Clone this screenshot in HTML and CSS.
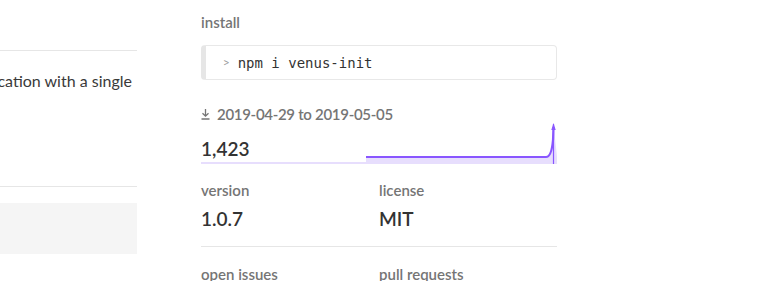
FILE: index.html
```html
<!DOCTYPE html>
<html>
<head>
<meta charset="utf-8">
<link rel="stylesheet" href="styles.css">
</head>
<body>
<div class="page">
  <div class="main">
    <div class="main-top"></div>
    <div class="readme">
      <p class="readme-text">ication with a single</p>
    </div>
    <div class="main-box"></div>
  </div>
  <aside class="sidebar">
    <h3 class="label">install</h3>
    <div class="install">
      <span class="prompt">&gt;</span>
      <code class="cmd">npm i venus-init</code>
    </div>
    <h3 class="label dl-label">
      <svg class="dl-icon" width="9" height="12" viewBox="0 0 9 12"><path d="M4.5 1 V8 M1.5 5.2 L4.5 8.2 L7.5 5.2 M0.5 11 H8.5" fill="none" stroke="#757575" stroke-width="1.3"/></svg>
      <span class="dl-range">2019-04-29 to 2019-05-05</span>
    </h3>
    <div class="downloads">
      <p class="value">1,423</p>
      <svg class="spark" width="356" height="46" viewBox="0 0 356 46" preserveAspectRatio="none">
        <rect x="0" y="44" width="356" height="2" fill="#e7defd"/>
        <path d="M165 46 V39 H346 C350 39 351 34 352 20 L352.5 6 L354 20 C355 30 356 36 356 39 V46 Z" fill="#e7defd"/>
        <path d="M165 39 H345 C349 39 351 33 352 22 L352.5 9" fill="none" stroke="#8956ff" stroke-width="2.2"/>
        <line x1="352.5" y1="6" x2="352.5" y2="46" stroke="#8956ff" stroke-width="1.2"/>
        <path d="M350.3 12 L352.5 5 L354.7 12 Z" fill="#8956ff"/>
      </svg>
    </div>
    <div class="pair">
      <div class="cell">
        <h3 class="label">version</h3>
        <p class="value">1.0.7</p>
      </div>
      <div class="cell">
        <h3 class="label">license</h3>
        <p class="value">MIT</p>
      </div>
    </div>
    <div class="pair">
      <div class="cell">
        <h3 class="label">open issues</h3>
      </div>
      <div class="cell">
        <h3 class="label">pull requests</h3>
      </div>
    </div>
  </aside>
</div>
</body>
</html>
```

FILE: styles.css
```css
html, body {
  margin: 0;
  padding: 0;
  background: #fff;
}
body {
  font-family: "Source Sans Pro", Lato, "Open Sans", sans-serif;
  color: #333;
  overflow: hidden;
  width: 781px;
  height: 281px;
}
.page {
  display: flex;
  gap: 64px;
}
.main {
  width: 137px;
  flex: none;
  overflow: hidden;
}
.main-top {
  height: 50px;
  border-bottom: 1px solid #e6e6e6;
}
.readme {
  height: 135px;
  border-bottom: 1px solid #e6e6e6;
  display: flex;
  justify-content: flex-end;
}
.readme-text {
  margin: 19px 5px 0 0;
  font-size: 16px;
  line-height: 22px;
  white-space: nowrap;
  color: #3a3a3a;
}
.main-box {
  margin-top: 16px;
  height: 51px;
  background: #f5f5f5;
}
.sidebar {
  width: 356px;
  flex: none;
}
.label {
  margin: 0;
  font-size: 15px;
  font-weight: 600;
  color: #757575;
  line-height: 20px;
}
.sidebar > .label:first-child {
  padding-top: 12px;
}
.install {
  margin-top: 13px;
  height: 33px;
  border: 1px solid #e8e8e8;
  border-left: 5px solid #e6e6e6;
  border-radius: 4px;
  display: flex;
  align-items: center;
  padding-left: 17px;
  gap: 8px;
}
.prompt {
  font-family: "DejaVu Sans Mono", monospace;
  font-size: 11px;
  color: #999;
  transform: scaleX(0.8);
}
.cmd {
  font-family: "DejaVu Sans Mono", monospace;
  font-size: 14px;
  color: #333;
}
.dl-label {
  margin-top: 24px;
  display: flex;
  align-items: center;
  gap: 7px;
}
.dl-range {
  letter-spacing: -0.3px;
}
.dl-icon {
  flex: none;
}
.downloads {
  position: relative;
  height: 40px;
}
.downloads .value {
  position: relative;
  z-index: 1;
  padding-top: 12px;
}
.spark {
  position: absolute;
  left: 0;
  bottom: 0;
}
.value {
  margin: 0;
  font-size: 19px;
  font-weight: 600;
  line-height: 26px;
  color: #333;
}
.pair {
  display: grid;
  grid-template-columns: 1fr 1fr;
  border-bottom: 1px solid #e6e6e6;
  padding: 16px 0 14px;
}
.pair .value {
  margin-top: 6px;
}
.pair:last-child {
  border-bottom: none;
  padding-top: 17px;
}
```
